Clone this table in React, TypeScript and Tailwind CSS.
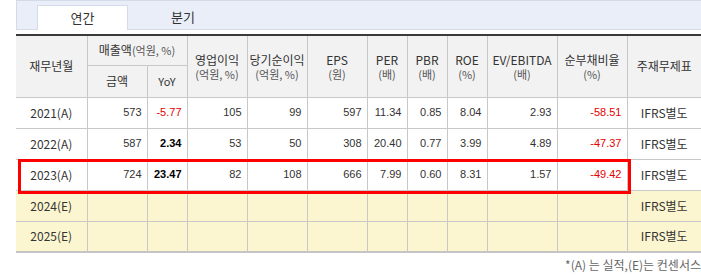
import React from "react";

type Row = {
  y: string;
  v: (string | null)[];
  est?: boolean;
};

const empty = [null, null, null, null, null, null, null, null, null, null];

const rows: Row[] = [
  { y: "2021(A)", v: ["573", "-5.77", "105", "99", "597", "11.34", "0.85", "8.04", "2.93", "-58.51"] },
  { y: "2022(A)", v: ["587", "2.34", "53", "50", "308", "20.40", "0.77", "3.99", "4.89", "-47.37"] },
  { y: "2023(A)", v: ["724", "23.47", "82", "108", "666", "7.99", "0.60", "8.31", "1.57", "-49.42"] },
  { y: "2024(E)", v: empty, est: true },
  { y: "2025(E)", v: empty, est: true },
];

const kr = "font-['Noto_Sans_CJK_KR','Noto_Sans',sans-serif]";

function Head2({ a, b }: { a: string; b: string }) {
  return (
    <th rowSpan={2} className="border border-[#c8c8c8] font-normal align-middle text-center px-0">
      <div className="flex flex-col items-center gap-[2px]">
        <span className="text-[12px] leading-[13px] text-[#333]">{a}</span>
        <span className="text-[11px] leading-[12px] text-[#555]">{b}</span>
      </div>
    </th>
  );
}

export default function App() {
  return (
    <div className={`w-[701px] h-[276px] bg-white pl-4 overflow-hidden ${kr}`}>
      {/* tabs */}
      <div className="h-[30px] bg-[#e9eef8] border border-[#d3dbe8] border-r-0 flex items-end pl-[20px]">
        <div className="w-[91px] h-[25px] bg-white border border-b-0 border-[#d3dbe8] flex items-center justify-center text-[13px] text-[#333] -mb-px">
          연간
        </div>
        <div className="w-[110px] h-[25px] flex items-center justify-center text-[13px] text-[#333]">
          분기
        </div>
      </div>

      <div className="relative mt-[4px]">
        <table className="border-collapse table-fixed w-[685px] border-t-2 border-t-[#3a3a3a] border-b-2 border-b-[#c4c4c4]">
          <colgroup>
            <col className="w-[71px]" />
            <col className="w-[60px]" />
            <col className="w-[40px]" />
            <col className="w-[60px]" />
            <col className="w-[60px]" />
            <col className="w-[60px]" />
            <col className="w-[40px]" />
            <col className="w-[40px]" />
            <col className="w-[40px]" />
            <col className="w-[70px]" />
            <col className="w-[70px]" />
            <col className="w-[74px]" />
          </colgroup>
          <thead className="bg-[#f2f2f2]">
            <tr className="h-[30px]">
              <th rowSpan={2} className="border-b border-r border-[#c8c8c8] font-normal text-[12px] text-[#333]">
                재무년월
              </th>
              <th colSpan={2} className="border border-[#c8c8c8] font-normal text-[12px] text-[#333] whitespace-nowrap">
                매출액<span className="text-[11px] text-[#555]">(억원, %)</span>
              </th>
              <Head2 a="영업이익" b="(억원, %)" />
              <Head2 a="당기순이익" b="(억원, %)" />
              <Head2 a="EPS" b="(원)" />
              <Head2 a="PER" b="(배)" />
              <Head2 a="PBR" b="(배)" />
              <Head2 a="ROE" b="(%)" />
              <Head2 a="EV/EBITDA" b="(배)" />
              <Head2 a="순부채비율" b="(%)" />
              <th rowSpan={2} className="border-b border-l border-[#c8c8c8] font-normal text-[12px] text-[#333]">
                주재무제표
              </th>
            </tr>
            <tr className="h-[32px]">
              <th className="border border-[#c8c8c8] font-normal text-[12px] text-[#333]">금액</th>
              <th className="border border-[#c8c8c8] font-normal text-[11px] text-[#333]">YoY</th>
            </tr>
          </thead>
          <tbody>
            {rows.map((r) => (
              <tr key={r.y} className={`h-[31px] ${r.est ? "bg-[#fcf6d0]" : "bg-white"}`}>
                <td className="border-b border-r border-[#c8c8c8] text-center text-[12px] text-[#333]">
                  {r.y}
                </td>
                {r.v.map((v, i) => {
                  const neg = v !== null && v.startsWith("-");
                  const dark = i === 1 && v !== null && !neg;
                  return (
                    <td
                      key={i}
                      className={`border border-[#c8c8c8] text-right pr-[5px] text-[11px] font-['Liberation_Sans',Arial,sans-serif] ${
                        neg ? "text-[#e60000]" : dark ? "text-black font-bold" : "text-[#333]"
                      }`}
                    >
                      {v ?? ""}
                    </td>
                  );
                })}
                <td className="border-b border-l border-[#c8c8c8] text-center text-[12px] text-[#333]">
                  IFRS별도
                </td>
              </tr>
            ))}
          </tbody>
        </table>
        <div className="absolute left-[2px] top-[125px] w-[613px] h-[35px] border-[3px] border-[#ff0000] pointer-events-none" />
      </div>

      <div className="flex justify-end mt-[3px] text-[12px] text-[#666]">
        *(A) 는 실적,(E)는 컨센서스
      </div>
    </div>
  );
}
